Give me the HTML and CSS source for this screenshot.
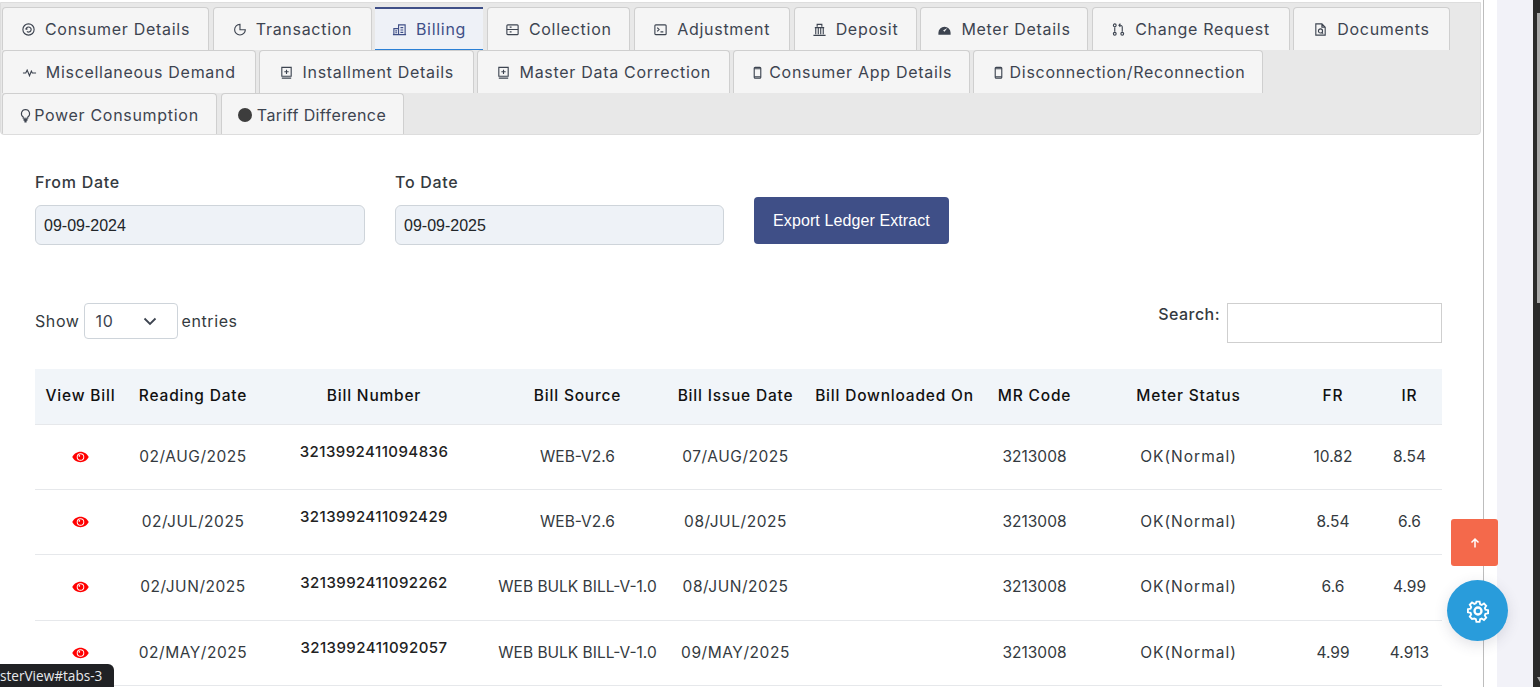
FILE: index.html
```html
<!DOCTYPE html>
<html lang="en">
<head>
<meta charset="utf-8">
<title>Billing</title>
<link rel="stylesheet" href="styles.css">
</head>
<body>
<div class="page">
<main class="panel">
  <nav class="tabs">
    <div class="tabrow">
      <a class="tab w1"><svg class="ic" viewBox="0 0 16 16"><circle cx="8" cy="8" r="6"/><path d="M5.500 7.500a2.700 2.700 0 1 1 .8 2.500M5.300 6.200l.2 1.500 1.400-.4"/></svg>Consumer Details</a>
      <a class="tab w2"><svg class="ic" viewBox="0 0 16 16"><path d="M8.500 2.500a5.700 5.700 0 1 0 5.700 5.700H8.500z"/></svg>Transaction</a>
      <a class="tab w3 active"><svg class="ic" viewBox="0 0 16 16"><path d="M2 13.500V7h5M7 13.500V3h7v10.500M1 13.500h14M9 6h3M9 8.500h3M9 11h3M3.500 9.500h2M3.500 11.500h2"/></svg>Billing</a>
      <a class="tab w4"><svg class="ic" viewBox="0 0 16 16"><rect x="2" y="3" width="12" height="10.500" rx="1"/><path d="M2 8h12M5 5.500h2M5 10.500h2"/></svg>Collection</a>
      <a class="tab w5"><svg class="ic" viewBox="0 0 16 16"><rect x="2" y="3" width="12" height="10.500" rx="1"/><path d="M4.500 6l2 2-2 2M8 10.500h3"/></svg>Adjustment</a>
      <a class="tab w6"><svg class="ic" viewBox="0 0 16 16"><path d="M1.500 14.300h13M3 6h10M5.500 5V2.500h5V5M4 6v7M6.700 6v7M9.300 6v7M12 6v7"/></svg>Deposit</a>
      <a class="tab w7"><svg class="ic solid" viewBox="0 0 16 16"><path fill-rule="evenodd" d="M1.500 13.500v-2a6.500 6.500 0 0 1 13 0v2zM8 10.500l3-4-4.500 2.500z"/></svg>Meter Details</a>
      <a class="tab w8"><svg class="ic" viewBox="0 0 16 16"><circle cx="4" cy="3.500" r="1.500"/><circle cx="4" cy="12.500" r="1.500"/><circle cx="12" cy="12.500" r="1.500"/><path d="M4 5.500v5M12 10.500V5.500a2 2 0 0 0-2-2H8.500M10 1.800L8.500 3.500 10 5.200"/></svg>Change Request</a>
      <a class="tab w9"><svg class="ic" viewBox="0 0 16 16"><path d="M3 2h6.500L13 5.500V14H3zM9.500 2v3.500H13"/><circle cx="8" cy="9.500" r="2.200"/><path d="M9.500 11l1.300 1.300"/></svg>Documents</a>
    </div>
    <div class="tabrow">
      <a class="tab w10"><svg class="ic" viewBox="0 0 16 16"><path d="M1 8.500h3l1.500-3 2.500 6 2-5 1 2h4"/></svg>Miscellaneous Demand</a>
      <a class="tab w11"><svg class="ic" viewBox="0 0 16 16"><path d="M3 12V2.500h10V12zM3 14h10M8 5v4.500M5.700 7.200h4.600"/></svg>Installment Details</a>
      <a class="tab w12"><svg class="ic" viewBox="0 0 16 16"><path d="M3 12V2.500h10V12zM3 14h10M8 5v4.500M5.700 7.200h4.600"/></svg>Master Data Correction</a>
      <a class="tab w13"><svg class="ic narrow" viewBox="0 0 16 16"><rect x="4.500" y="2.500" width="7" height="11.500" rx="1"/><path d="M4.500 4h7M4.500 12.500h7"/></svg>Consumer App Details</a>
      <a class="tab w14"><svg class="ic narrow" viewBox="0 0 16 16"><rect x="4.500" y="2.500" width="7" height="11.500" rx="1"/><path d="M4.500 4h7M4.500 12.500h7"/></svg>Disconnection/Reconnection</a>
    </div>
    <div class="tabrow">
      <a class="tab w15"><svg class="ic bulb" viewBox="2 0 12 16"><path d="M8 1.500a4.500 4.500 0 0 0-2.500 8.200V11h5V9.700A4.500 4.500 0 0 0 8 1.500z"/><path class="thick" d="M5.800 12.800h4.400M6.800 14.600h2.400"/></svg>Power Consumption</a>
      <a class="tab w16"><span class="dot"></span>Tariff Difference</a>
    </div>
  </nav>

  <section class="filters">
    <div class="field"><label>From Date</label><input class="date" value="09-09-2024"></div>
    <div class="field"><label>To Date</label><input class="date" value="09-09-2025"></div>
    <button class="export">Export Ledger Extract</button>
  </section>

  <section class="controls">
    <div class="length">Show <span class="select">10<svg viewBox="0 0 16 16"><path d="M2.500 5.500L8 11l5.500-5.500"/></svg></span> entries</div>
    <div class="search">Search: <input class="searchbox"></div>
  </section>

  <table class="grid">
    <colgroup>
      <col class="c1"><col class="c2"><col class="c3"><col class="c4"><col class="c5"><col class="c6"><col class="c7"><col class="c8"><col class="c9"><col class="c10">
    </colgroup>
    <thead>
      <tr><th>View Bill</th><th>Reading Date</th><th>Bill Number</th><th>Bill Source</th><th>Bill Issue Date</th><th>Bill Downloaded On</th><th>MR Code</th><th>Meter Status</th><th>FR</th><th>IR</th></tr>
    </thead>
    <tbody>
      <tr><td><svg class="eye" viewBox="0 0 18 12"><path fill-rule="evenodd" d="M9 .5C5 .5 1.800 3 .3 6c1.500 3 4.700 5.500 8.700 5.500s7.200-2.500 8.700-5.500C16.200 3 13 .5 9 .5zM9 10a4 4 0 1 1 0-8 4 4 0 0 1 0 8z"/><circle cx="9" cy="6" r="3"/><circle class="glint" cx="7.800" cy="4.800" r=".9"/></svg></td><td class="d">02/AUG/2025</td><td class="num">3213992411094836</td><td>WEB-V2.6</td><td class="d">07/AUG/2025</td><td></td><td>3213008</td><td class="st">OK(Normal)</td><td>10.82</td><td>8.54</td></tr>
      <tr><td><svg class="eye" viewBox="0 0 18 12"><path fill-rule="evenodd" d="M9 .5C5 .5 1.800 3 .3 6c1.500 3 4.700 5.500 8.700 5.500s7.200-2.500 8.700-5.500C16.200 3 13 .5 9 .5zM9 10a4 4 0 1 1 0-8 4 4 0 0 1 0 8z"/><circle cx="9" cy="6" r="3"/><circle class="glint" cx="7.800" cy="4.800" r=".9"/></svg></td><td class="d">02/JUL/2025</td><td class="num">3213992411092429</td><td>WEB-V2.6</td><td class="d">08/JUL/2025</td><td></td><td>3213008</td><td class="st">OK(Normal)</td><td>8.54</td><td>6.6</td></tr>
      <tr class="tall"><td><svg class="eye" viewBox="0 0 18 12"><path fill-rule="evenodd" d="M9 .5C5 .5 1.800 3 .3 6c1.500 3 4.700 5.500 8.700 5.500s7.200-2.500 8.700-5.500C16.200 3 13 .5 9 .5zM9 10a4 4 0 1 1 0-8 4 4 0 0 1 0 8z"/><circle cx="9" cy="6" r="3"/><circle class="glint" cx="7.800" cy="4.800" r=".9"/></svg></td><td class="d">02/JUN/2025</td><td class="num">3213992411092262</td><td>WEB BULK BILL-V-1.0</td><td class="d">08/JUN/2025</td><td></td><td>3213008</td><td class="st">OK(Normal)</td><td>6.6</td><td>4.99</td></tr>
      <tr><td><svg class="eye" viewBox="0 0 18 12"><path fill-rule="evenodd" d="M9 .5C5 .5 1.800 3 .3 6c1.500 3 4.700 5.500 8.700 5.500s7.200-2.500 8.700-5.500C16.200 3 13 .5 9 .5zM9 10a4 4 0 1 1 0-8 4 4 0 0 1 0 8z"/><circle cx="9" cy="6" r="3"/><circle class="glint" cx="7.800" cy="4.800" r=".9"/></svg></td><td class="d">02/MAY/2025</td><td class="num">3213992411092057</td><td>WEB BULK BILL-V-1.0</td><td class="d">09/MAY/2025</td><td></td><td>3213008</td><td class="st">OK(Normal)</td><td>4.99</td><td>4.913</td></tr>
    </tbody>
  </table>
</main>
<aside class="gutter"></aside>
<div class="scrollstrip"><span class="thumb"></span><span class="arrow"></span></div>
</div>
<a class="totop"><svg viewBox="0 0 12 12"><path d="M6 10.500V2M2.500 5.500L6 2l3.500 3.500"/></svg></a>
<a class="gear"><svg viewBox="0 0 24 24"><path d="M10.300 2h3.400l.6 2.800 1.700.7 2.400-1.500 2.400 2.400-1.500 2.400.7 1.700 2.800.6v3.400l-2.800.6-.7 1.700 1.500 2.400-2.400 2.400-2.400-1.500-1.700.7-.6 2.800h-3.400l-.6-2.800-1.700-.7L5.600 20.500l-2.400-2.400 1.500-2.400-.7-1.700-2.800-.6V10l2.800-.6.7-1.700L3.200 5.300l2.400-2.400L8 4.400l1.700-.7z" transform="translate(2.400 2.400) scale(.8)"/><circle cx="12" cy="12" r="3"/></svg></a>
<div class="status">sterView#tabs-3</div>
</body>
</html>
```
FILE: styles.css
```css
* { box-sizing: border-box; }
html, body { margin: 0; height: 687px; overflow: hidden; background: #fff; }
body { font-family: Inter, "Open Sans", sans-serif; color: #343a40; position: relative; }
.page { display: flex; height: 687px; }
.panel { width: 1484px; border-right: 1px solid #bdbdbd; padding-top: 2px; flex: none; }
.gutter { flex: 1; background: linear-gradient(to right, #fff 13px, #f2f2f8 13px); }
.scrollstrip { width: 7px; background: #2b2b2b; flex: none; position: relative; }
.thumb { position: absolute; top: 13px; right: 0; width: 3px; height: 290px; background: #a8a8a8; }
.arrow { position: absolute; top: 677px; right: 0; width: 0; height: 0; border-top: 5px solid #a8a8a8; border-left: 3px solid transparent; border-right: 0; }
.tabs { width: 1481px; height: 133px; background: #e8e8e8; border: 1px solid #ddd; border-radius: 0 0 4px 4px; padding: 4px 0 0 1px; display: flex; flex-direction: column; overflow: hidden; }
.tabrow { display: flex; height: 43px; gap: 3.500px; flex: none; }
.tab { height: 43px; background: #f5f5f5; border: 1px solid #cfcfcf; border-bottom: 0; border-radius: 4px 4px 0 0; display: flex; align-items: center; justify-content: center; font-size: 16px; letter-spacing: .7px; color: #3d4450; white-space: nowrap; flex: none; font-weight: 400; }
.active { background: #eef1f7; border: 0; border-top: 2px solid #3f4f87; border-bottom: 1px solid #2a7fd6; border-radius: 0; color: #3f4f87; }
.w1 { width: 207px; } .w2 { width: 159px; } .w3 { width: 108px; } .w4 { width: 143.500px; } .w5 { width: 156.500px; } .w6 { width: 123px; } .w7 { width: 168px; } .w8 { width: 198px; } .w9 { width: 157px; }
.w10 { width: 253.500px; } .w11 { width: 214.500px; } .w12 { width: 252.500px; } .w13 { width: 236.500px; } .w14 { width: 290px; }
.w15 { width: 215px; } .w16 { width: 183px; letter-spacing: .4px; }
.ic { width: 15px; height: 15px; margin-right: 9px; fill: none; stroke: #3d4450; stroke-width: 1.200; flex: none; }
.ic.solid { fill: #3d4450; stroke: none; }
.ic.narrow { margin-right: 4px; }
.ic.bulb { width: 11px; margin-right: 3px; }
.thick { stroke-width: 1.800; }
.active .ic { stroke: #3f4f87; }
.dot { width: 14px; height: 14px; border-radius: 50%; background: #3d3d3d; margin-right: 5px; }
.filters { display: flex; gap: 30px; padding: 36px 0 0 35px; align-items: flex-start; }
.field { width: 330px; display: flex; flex-direction: column; gap: 11px; }
.field + .field { width: 329px; }
.field label { font-size: 16px; letter-spacing: .72px; line-height: 23px; font-weight: 500; color: #343a40; }
.date { height: 40px; width: 100%; background: #eef2f7; border: 1px solid #ced4da; border-radius: 6px; padding: 2px 8px 0; font: 16px "Liberation Sans", sans-serif; color: #212529; }
.export { margin-top: 26px; height: 47px; width: 195px; background: #3f4f87; color: #fff; border: 0; border-radius: 4px; font: 16px "Liberation Sans", sans-serif; letter-spacing: .1px; }
.controls { display: flex; justify-content: space-between; padding: 58px 41px 0 35px; align-items: flex-start; }
.length { display: flex; align-items: center; font-size: 16px; letter-spacing: .6px; height: 36px; }
.select { width: 94px; height: 36px; border: 1px solid #ced4da; border-radius: 4px; display: flex; align-items: center; justify-content: space-between; padding: 0 19px 0 11px; color: #3d4450; margin: 0 4px; }
.select svg { width: 16px; height: 16px; fill: none; stroke: #3d4450; stroke-width: 1.800; }
.search { display: flex; gap: 7px; font-size: 16px; letter-spacing: .45px; font-weight: 500; align-items: flex-start; line-height: 22px; }
.searchbox { width: 215px; height: 40px; border: 1px solid #cfcfcf; background: #fff; }
.grid { width: 1407px; margin: 26px 0 0 35px; border-collapse: collapse; table-layout: fixed; font-size: 15.500px; }
.c1 { width: 91px; } .c2 { width: 134px; } .c3 { width: 228px; } .c4 { width: 179px; } .c5 { width: 137px; } .c6 { width: 181px; } .c7 { width: 99px; } .c8 { width: 209px; } .c9 { width: 80px; } .c10 { width: 69px; }
th { height: 55px; background: #f1f5f9; color: #111; font-weight: 500; letter-spacing: .8px; padding: 0 0 2px; border-bottom: 1px solid #e6e8eb; text-align: center; }
td { height: 65px; padding: 0; text-align: center; border-bottom: 1px solid #e6e8eb; color: #343a40; }
.tall td { height: 66px; padding-bottom: 1px; }
th:last-child, td:last-child { padding-left: 4px; }
.d { letter-spacing: .55px; }
.st { letter-spacing: 1px; }
.num { font-weight: 500; color: #222; font-size: 15px; letter-spacing: .45px; padding-bottom: 10px; }
.tall .num { padding-bottom: 10px; }
.eye { width: 17px; height: 12px; fill: #f00; display: block; margin: 0 auto; }
.glint { fill: #fff; }
.totop { position: absolute; left: 1451px; top: 519px; width: 47px; height: 47px; background: #f4694b; border-radius: 3px; display: flex; align-items: center; justify-content: center; }
.totop svg { width: 12px; height: 12px; fill: none; stroke: #fff; stroke-width: 1.500; }
.gear { position: absolute; left: 1447px; top: 580px; width: 61px; height: 61px; border-radius: 50%; background: #299cdb; box-shadow: 0 4px 14px rgba(60,60,90,.15); display: flex; align-items: center; justify-content: center; }
.gear svg { width: 28px; height: 28px; fill: none; stroke: #fff; stroke-width: 2; }
.status { position: absolute; left: 0; bottom: 0; width: 114px; height: 23px; background: #202124; color: #e8eaed; border-radius: 0 6px 0 0; font: 13.600px/24px "Open Sans", sans-serif; text-align: right; padding-right: 12px; white-space: nowrap; }
```
